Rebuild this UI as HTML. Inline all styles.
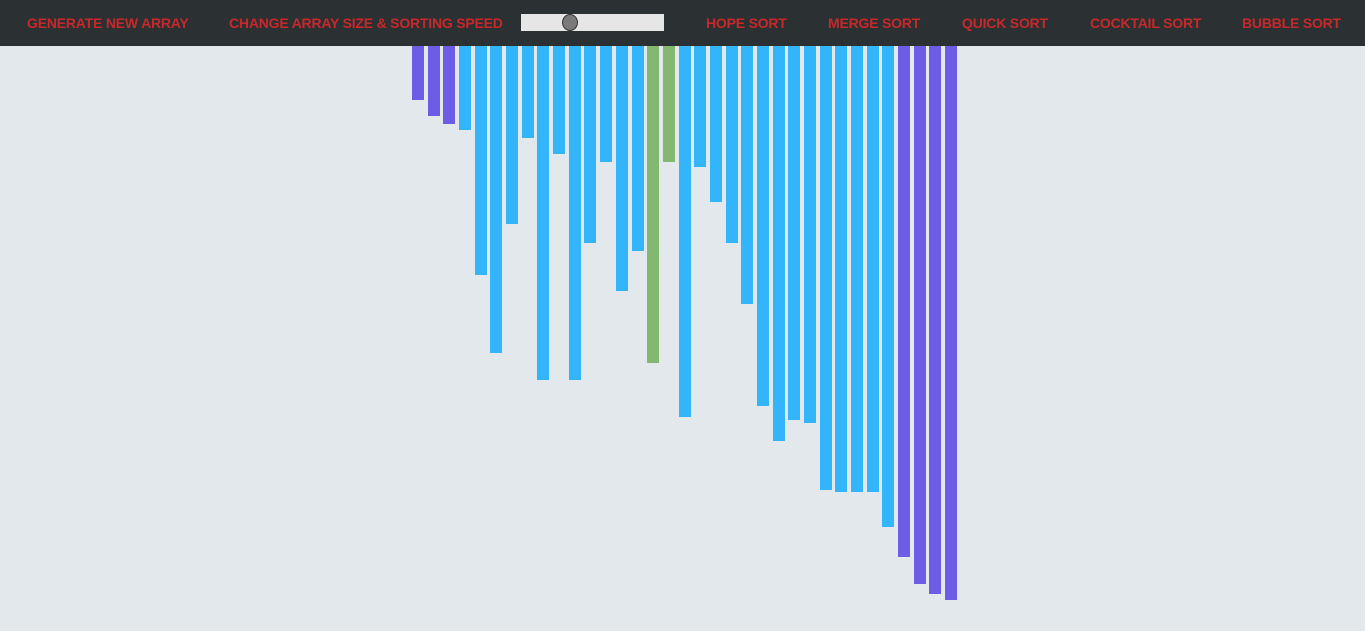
<!DOCTYPE html>
<html><head><style>
body{margin:0;width:1365px;height:631px;background:#e3e8ec;overflow:hidden;position:relative;font-family:"Liberation Sans",sans-serif}
.nav{position:absolute;left:0;top:0;width:1365px;height:46px;background:#2b3033;z-index:2}
.nav span{position:absolute;top:15px;color:#c9282a;font-weight:bold;font-size:14px;white-space:nowrap;letter-spacing:-0.2px}
.sl{position:absolute;left:521px;top:14px;width:143px;height:17px;background:#e6e6e6}
.th{position:absolute;left:562px;top:14px;width:14px;height:15px;border-radius:50%;background:#7a7a7a;border:1.5px solid #333}
.b{position:absolute;top:0;width:12px}
</style></head><body>
<div class="nav">
<span style="left:27px">GENERATE NEW ARRAY</span>
<span style="left:229px">CHANGE ARRAY SIZE &amp; SORTING SPEED</span>
<div class="sl"></div><div class="th"></div>
<span style="left:706px">HOPE SORT</span>
<span style="left:828px">MERGE SORT</span>
<span style="left:962px">QUICK SORT</span>
<span style="left:1090px">COCKTAIL SORT</span>
<span style="left:1242px">BUBBLE SORT</span>
</div>
<div id="bars"></div>
<script>
var h=[100,116,124,130,275,353,224,138,380,154,380,243,162,291,251,363,162,417,167,202,243,304,406,441,420,423,490,492,492,492,527,557,584,594,600];
var s='';
for(var i=0;i<h.length;i++){
 var c=(i<3||i>30)?'#6e5ce6':(i==15||i==16)?'#82b86f':'#33b5fb';
 var x=Math.round(412+i*15.68);
 s+='<div class="b" style="left:'+x+'px;height:'+h[i]+'px;background:'+c+'"></div>';
}
document.getElementById('bars').innerHTML=s;
</script>
</body></html>
